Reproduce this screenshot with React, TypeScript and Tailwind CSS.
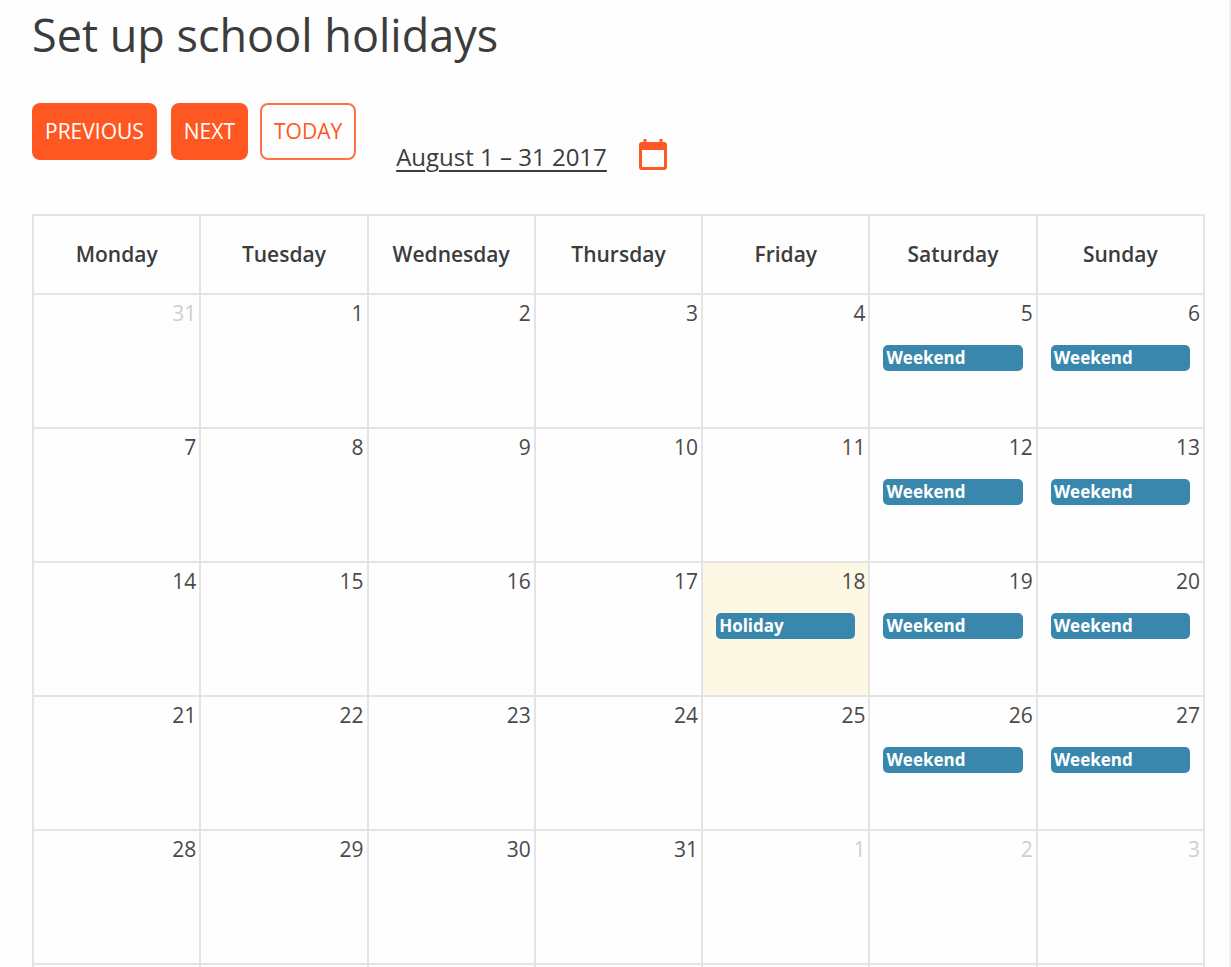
type Day = { date: number; outside?: boolean; today?: boolean; event?: string };

const WEEKDAYS = ["Monday", "Tuesday", "Wednesday", "Thursday", "Friday", "Saturday", "Sunday"];

function buildWeeks(): Day[][] {
  return Array.from({ length: 5 }, (_, week) =>
    Array.from({ length: 7 }, (_, column) => {
      const offset = week * 7 + column;
      if (offset === 0) return { date: 31, outside: true };
      if (offset > 31) return { date: offset - 31, outside: true };
      const event = column >= 5 ? "Weekend" : offset === 18 ? "Holiday" : undefined;
      return { date: offset, today: offset === 18, event };
    }),
  );
}

function CalendarIcon() {
  return (
    <svg viewBox="0 0 28 31" className="h-[31px] w-7" aria-hidden="true">
      <path
        fill="#ff5722"
        fillRule="evenodd"
        d="M4.500 0h3v3h13V0h3v3H25a3 3 0 0 1 3 3v22a3 3 0 0 1-3 3H3a3 3 0 0 1-3-3V6a3 3 0 0 1 3-3h1.500zM3 11v17h22V11z"
      />
    </svg>
  );
}

function DayCell({ day }: { day: Day }) {
  return (
    <td className={`h-[134px] border-2 border-[#e4e4e4] p-0 align-top ${day.today ? "bg-[#fcf8e3]" : ""}`}>
      <div className={`pt-1 pr-[3px] text-right text-[21px] leading-7 ${day.outside ? "text-[#cfcfcf]" : "text-[#4a4a4a]"}`}>
        {day.date}
      </div>
      {day.event && (
        <div className="mx-[13px] mt-[18px] rounded-[5px] bg-[#3a87ad] px-[3px] text-[17px] leading-[26px] font-bold text-white">
          {day.event}
        </div>
      )}
    </td>
  );
}

export default function App() {
  const primary = "h-[57px] rounded-lg border-2 border-[#ff5722] bg-[#ff5722] px-[11px] text-[21px] text-white";
  return (
    <main className="h-screen overflow-hidden border-r-2 border-[#f0f0f0] bg-[#fefefe] pr-6 pl-8 font-['Open_Sans',sans-serif] text-[#3c3c3c]">
      <h1 className="pt-[5px] text-[45px] leading-[60px]">Set up school holidays</h1>
      <div className="mt-[38px] flex items-start">
        <button type="button" className={primary}>PREVIOUS</button>
        <button type="button" className={`ml-[14px] ${primary}`}>NEXT</button>
        <button type="button" className="ml-3 h-[57px] rounded-lg border-2 border-[#ff7043] px-3 text-[21px] text-[#ff5722]">
          TODAY
        </button>
        <a href="#month" className="mt-9 ml-10 text-2xl leading-9 underline decoration-2 underline-offset-4">
          August 1 – 31 2017
        </a>
        <button type="button" aria-label="Choose month" className="mt-9 ml-8">
          <CalendarIcon />
        </button>
      </div>
      <table id="month" className="mt-[39px] w-full table-fixed border-collapse">
        <thead>
          <tr>
            {WEEKDAYS.map((name) => (
              <th key={name} scope="col" className="h-[79px] border-2 border-[#e4e4e4] p-0 text-[21px] font-semibold">
                {name}
              </th>
            ))}
          </tr>
        </thead>
        <tbody>
          {buildWeeks().map((week, index) => (
            <tr key={index}>
              {week.map((day, column) => (
                <DayCell key={column} day={day} />
              ))}
            </tr>
          ))}
          <tr>
            {WEEKDAYS.map((name) => (
              <td key={name} className="h-[134px] border-2 border-[#e4e4e4] p-0" />
            ))}
          </tr>
        </tbody>
      </table>
    </main>
  );
}
